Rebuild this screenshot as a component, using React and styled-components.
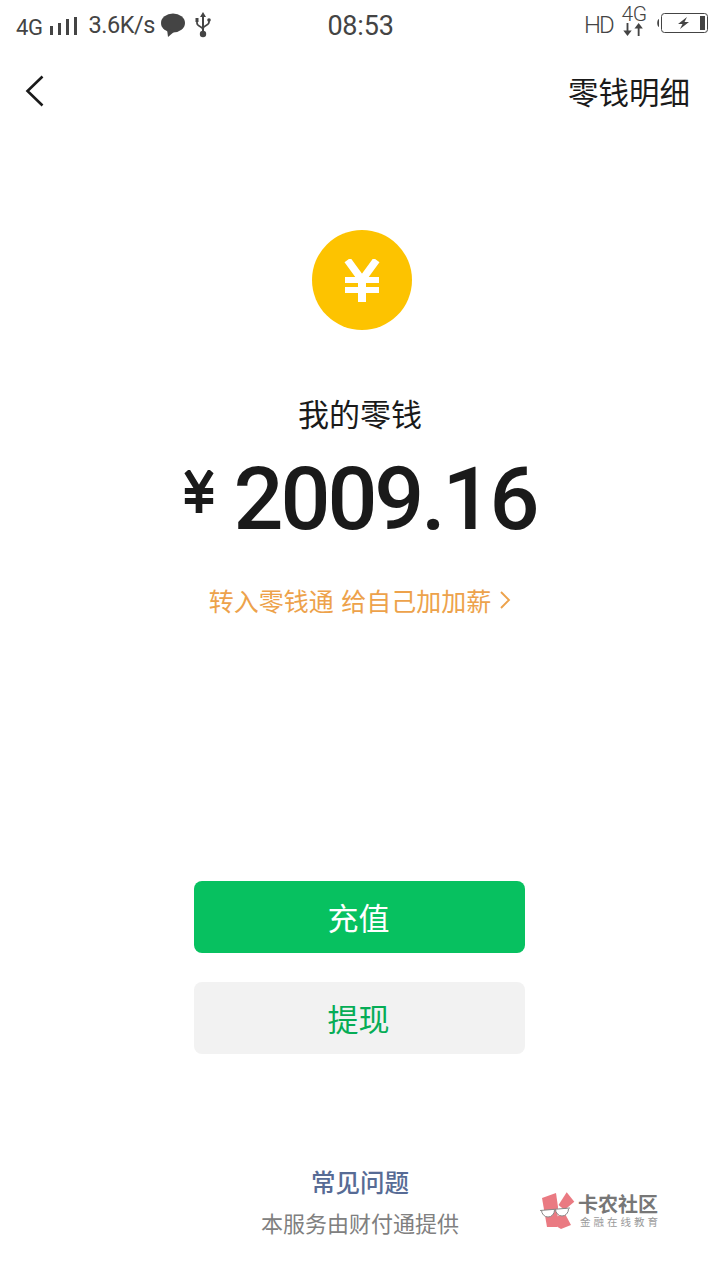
import React from 'react';
import styled, { createGlobalStyle } from 'styled-components';

const CJK = '"Noto Sans CJK SC", "Noto Sans", sans-serif';

const GlobalStyle = createGlobalStyle`
  html, body {
    margin: 0;
    padding: 0;
    background: #fff;
  }
  body {
    font-family: Roboto, ${CJK};
  }
`;

const Page = styled.div`
  position: relative;
  width: 720px;
  height: 1280px;
  overflow: hidden;
  background: #fff;
  display: flex;
  flex-direction: column;
`;

const StatusBar = styled.div`
  height: 50px;
  display: grid;
  grid-template-columns: 1fr auto 1fr;
  align-items: center;
  padding: 0 12px 0 16px;
  color: #444;
`;

const StatusLeft = styled.div`
  display: flex;
  align-items: center;
`;

const StatusRight = styled.div`
  display: flex;
  align-items: center;
  justify-content: flex-end;
`;

const Network = styled.span`
  font-size: 22px;
  letter-spacing: -0.4px;
  margin-top: 5px;
`;

const Speed = styled.span`
  font-size: 23.5px;
  letter-spacing: -0.45px;
  margin-left: 12px;
`;

const Clock = styled.span`
  font-size: 27px;
  letter-spacing: -0.2px;
  margin: 2px 3px 0 0;
`;

const Hd = styled.span`
  font-size: 24px;
  font-weight: 300;
  letter-spacing: -1.8px;
  margin-right: 8px;
`;

const Network4GStack = styled.div`
  display: flex;
  flex-direction: column;
  align-items: center;
  width: 26px;
  margin: 0 9px 8px 0;
`;

const Network4GLabel = styled.span`
  font-size: 21px;
  font-weight: 300;
  line-height: 17px;
  letter-spacing: -0.6px;
`;

const NavBar = styled.div`
  height: 84px;
  display: flex;
  align-items: center;
  justify-content: space-between;
  padding: 0 30px 0 25px;
`;

const NavTitle = styled.span`
  font-family: ${CJK};
  font-size: 30.5px;
  color: #1a1a1a;
  margin-bottom: 2px;
`;

const Hero = styled.div`
  display: flex;
  flex-direction: column;
  align-items: center;
  margin-top: 96px;
`;

const Coin = styled.div`
  width: 100px;
  height: 100px;
  border-radius: 50%;
  background: #fdc300;
  display: flex;
  align-items: center;
  justify-content: center;
  margin-left: 4px;
`;

const Label = styled.div`
  font-family: ${CJK};
  font-size: 31px;
  line-height: 44px;
  color: #1a1a1a;
  margin-top: 61px;
`;

const Amount = styled.div`
  display: flex;
  align-items: flex-start;
  gap: 20px;
  margin-top: 20px;
  height: 88px;
`;

const AmountYen = styled.div`
  display: flex;
  margin-top: 15px;
`;

const AmountValue = styled.span`
  font-family: Roboto, sans-serif;
  font-size: 88px;
  font-weight: 500;
  line-height: 88px;
  letter-spacing: -3.1px;
  color: #1a1a1a;
`;

const PromoLink = styled.div`
  display: flex;
  align-items: center;
  gap: 8px;
  margin-top: 39px;
  font-family: ${CJK};
  font-size: 25px;
  line-height: 36px;
  color: #eda24b;
`;

const PromoText = styled.span`
  word-spacing: 2px;
`;

const Actions = styled.div`
  display: flex;
  flex-direction: column;
  align-items: center;
  gap: 29px;
  margin-top: 263px;
  padding-right: 1px;
`;

const ActionButton = styled.button`
  width: 331px;
  height: 72px;
  border: 0;
  border-radius: 8px;
  padding: 0 2px 2px 0;
  font-family: ${CJK};
  font-size: 31px;
  background: ${props => (props.$primary ? '#07c160' : '#f2f2f2')};
  color: ${props => (props.$primary ? '#fff' : '#06ad56')};
`;

const Footer = styled.div`
  display: flex;
  flex-direction: column;
  align-items: center;
  margin-top: 110px;
  font-family: ${CJK};
`;

const FaqLink = styled.div`
  font-size: 24.5px;
  line-height: 36px;
  font-weight: 500;
  color: #576b95;
`;

const Provider = styled.div`
  font-size: 22px;
  line-height: 32px;
  margin-top: 6px;
  color: #808080;
`;

const Watermark = styled.div`
  position: absolute;
  left: 540px;
  top: 1190px;
  display: flex;
  align-items: flex-start;
  gap: 2px;
`;

const WatermarkText = styled.div`
  display: flex;
  flex-direction: column;
  margin-top: 3px;
  font-family: ${CJK};
`;

const WatermarkName = styled.span`
  font-size: 20px;
  line-height: 22px;
  font-weight: 700;
  color: #777;
`;

const WatermarkTag = styled.span`
  font-size: 10.5px;
  line-height: 13px;
  letter-spacing: 3px;
  margin-left: 2px;
  white-space: nowrap;
  color: #9a9a9a;
`;

const Signal = () => (
  <svg width="28" height="20" viewBox="0 0 28 20" style={{ marginLeft: 6, marginTop: 2 }}>
    <rect x="1" y="10" width="3" height="9" fill="#444" />
    <rect x="9" y="7" width="3" height="12" fill="#444" />
    <rect x="17" y="3" width="3" height="16" fill="#444" />
    <rect x="25" y="1" width="3" height="18" fill="#444" />
  </svg>
);

const ChatBubble = () => (
  <svg width="24" height="24" viewBox="0 0 24 24" style={{ marginLeft: 6 }}>
    <ellipse cx="12" cy="10" rx="12" ry="9.5" fill="#444" />
    <path d="M6 16 L7 24 L14 18 Z" fill="#444" />
  </svg>
);

const Usb = () => (
  <svg width="16" height="26" viewBox="0 0 16 26" style={{ marginLeft: 10 }}>
    <path d="M8 0 L11 5 H5 Z" fill="#444" />
    <path d="M8 4 V22" stroke="#444" strokeWidth="2" fill="none" />
    <rect x="0.5" y="6" width="3" height="4" fill="#444" />
    <circle cx="14" cy="8" r="1.8" fill="#444" />
    <path d="M2 9 V11 C2 15 8 14 8 18" stroke="#444" strokeWidth="1.7" fill="none" />
    <path d="M14 9 V10 C14 14 8 13 8 17" stroke="#444" strokeWidth="1.7" fill="none" />
    <circle cx="8" cy="22" r="3.2" fill="#444" />
  </svg>
);

const DataArrows = () => (
  <svg width="26" height="13" viewBox="0 0 26 14">
    <path d="M6 0 V9" stroke="#444" strokeWidth="2" />
    <path d="M1.5 8 H10.5 L6 14 Z" fill="#444" />
    <path d="M18 14 V5" stroke="#444" strokeWidth="2" />
    <path d="M13.5 6 H22.5 L18 0 Z" fill="#444" />
  </svg>
);

const Battery = () => (
  <svg width="52" height="22" viewBox="0 0 52 22" style={{ marginBottom: 4 }}>
    <path d="M3 7 C0.6 8 0.6 14 3 15 Z" fill="#444" />
    <rect x="5.5" y="1.5" width="46" height="19" rx="3" fill="none" stroke="#444" strokeWidth="1" />
    <path d="M31 5 L22 12 H26.5 L24 17 L33 10 H28.5 Z" fill="#444" />
    <rect x="44" y="4" width="5" height="14" fill="#444" />
  </svg>
);

const BackIcon = () => (
  <svg width="20" height="32" viewBox="0 0 20 32" style={{ marginBottom: 2 }}>
    <path d="M17.5 1.5 L2.5 16 L17.5 30.5" fill="none" stroke="#1a1a1a" strokeWidth="2.6" />
  </svg>
);

// stretched by its two uses, the coin one is wider than the amount one
const YenGlyph = ({ width, height, color }) => (
  <svg width={width} height={height} viewBox="0 0 36 43" preserveAspectRatio="none">
    <path d="M3.5 1 L18 21 L32.5 1" fill="none" stroke={color} strokeWidth="7.4" />
    <path d="M1 21 H35 M1 31 H35" stroke={color} strokeWidth="6.2" />
    <path d="M18 20 V43" stroke={color} strokeWidth="8" />
  </svg>
);

const Chevron = () => (
  <svg width="12" height="20" viewBox="0 0 12 20">
    <path d="M2 2 L10 10 L2 18" fill="none" stroke="#eda24b" strokeWidth="1.9" />
  </svg>
);

const WatermarkLogo = () => (
  <svg width="36" height="40" viewBox="0 0 36 40">
    <path d="M2 8 L16 3 L18 17 L17 37 H7 Z" fill="#ea7a82" />
    <path d="M18.5 15 L26.7 2.3 L34.3 11.7 L24.5 20 Z" fill="#ea7a82" />
    <path d="M16 27 L24.3 22.5 L31 35 L21 39 L16 36 Z" fill="#ea7a82" />
    <path d="M1.5 20 A6.5 7 0 0 0 14.5 20 H1.5 Z M15.5 19 A6.5 7 0 0 0 28.5 19 H15.5 Z" fill="#fff" />
    <path d="M1.5 20 A6.5 7 0 0 0 14.5 20 M15.5 19 A6.5 7 0 0 0 28.5 19" fill="none" stroke="#8a8a8a" strokeWidth="1" />
    <path d="M0 20.5 L30 18" stroke="#8a8a8a" strokeWidth="1.2" />
  </svg>
);

const App = () => (
  <Page>
    <GlobalStyle />
    <StatusBar>
      <StatusLeft>
        <Network>4G</Network>
        <Signal />
        <Speed>3.6K/s</Speed>
        <ChatBubble />
        <Usb />
      </StatusLeft>
      <Clock>08:53</Clock>
      <StatusRight>
        <Hd>HD</Hd>
        <Network4GStack>
          <Network4GLabel>4G</Network4GLabel>
          <DataArrows />
        </Network4GStack>
        <Battery />
      </StatusRight>
    </StatusBar>
    <NavBar>
      <BackIcon />
      <NavTitle>零钱明细</NavTitle>
    </NavBar>
    <Hero>
      <Coin>
        <YenGlyph width={36} height={43} color="#fff" />
      </Coin>
      <Label>我的零钱</Label>
      <Amount>
        <AmountYen>
          <YenGlyph width={30} height={43} color="#1a1a1a" />
        </AmountYen>
        <AmountValue>2009.16</AmountValue>
      </Amount>
      <PromoLink>
        <PromoText>转入零钱通 给自己加加薪</PromoText>
        <Chevron />
      </PromoLink>
    </Hero>
    <Actions>
      <ActionButton $primary>充值</ActionButton>
      <ActionButton>提现</ActionButton>
    </Actions>
    <Footer>
      <FaqLink>常见问题</FaqLink>
      <Provider>本服务由财付通提供</Provider>
    </Footer>
    <Watermark>
      <WatermarkLogo />
      <WatermarkText>
        <WatermarkName>卡农社区</WatermarkName>
        <WatermarkTag>金融在线教育</WatermarkTag>
      </WatermarkText>
    </Watermark>
  </Page>
);

export default App;
